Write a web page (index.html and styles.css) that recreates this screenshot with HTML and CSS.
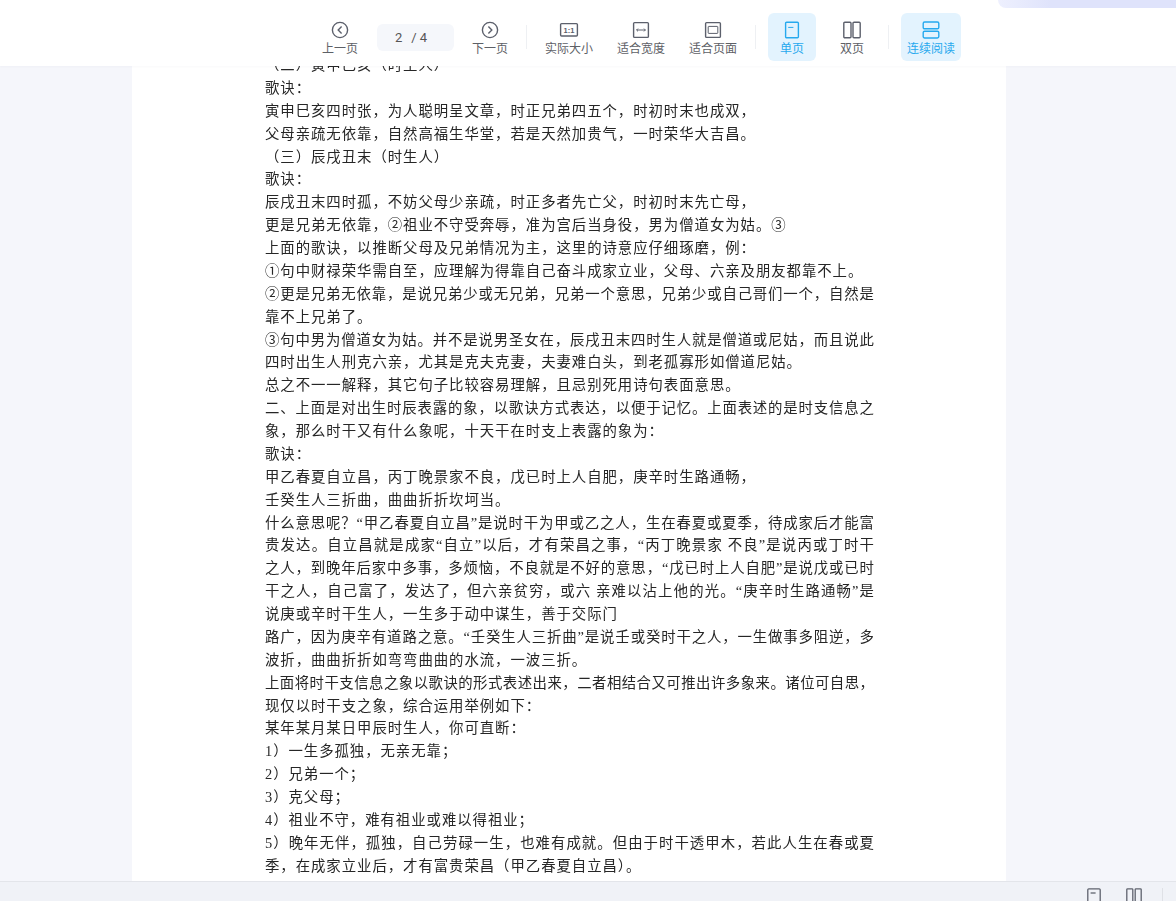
FILE: index.html
```html
<!DOCTYPE html>
<html lang="zh-CN">
<head>
<meta charset="utf-8">
<title>PDF 阅读器</title>
<link rel="stylesheet" href="styles.css">
</head>
<body>
<div class="app">
  <header class="toolbar">
    <div class="tool">
      <svg class="icon" viewBox="0 0 18 18"><circle cx="9" cy="9" r="7.6"/><path d="M10.6 5.6 7.2 9l3.4 3.4"/></svg>
      <span class="label">上一页</span>
    </div>
    <div class="pager"><span>2</span><span>/ 4</span></div>
    <div class="tool">
      <svg class="icon" viewBox="0 0 18 18"><circle cx="9" cy="9" r="7.6"/><path d="M7.4 5.6 10.8 9l-3.4 3.4"/></svg>
      <span class="label">下一页</span>
    </div>
    <i class="sep"></i>
    <div class="tool wide">
      <svg class="icon icon-lg" viewBox="0 0 20 18"><rect x="1.6" y="2.6" width="16.8" height="12.4" rx="1"/><text x="10" y="11.6" class="ratio">1:1</text></svg>
      <span class="label">实际大小</span>
    </div>
    <div class="tool wide">
      <svg class="icon" viewBox="0 0 18 18"><rect x="1.6" y="1.6" width="14.8" height="14.8" rx="1"/><path class="thin" d="M4.6 9h8.8M6 7.6 4.6 9 6 10.4M12 7.6 13.4 9 12 10.4"/></svg>
      <span class="label">适合宽度</span>
    </div>
    <div class="tool wide">
      <svg class="icon" viewBox="0 0 18 18"><rect x="1.6" y="1.6" width="14.8" height="14.8" rx="1"/><rect class="thin" x="4.2" y="5.4" width="9.6" height="7" rx=".5"/></svg>
      <span class="label">适合页面</span>
    </div>
    <i class="sep"></i>
    <div class="tool active">
      <svg class="icon" viewBox="0 0 18 18"><rect x="2.6" y="1.2" width="12.8" height="15.6" rx="1"/><path class="thin" d="M5.2 6.4h5.2"/></svg>
      <span class="label">单页</span>
    </div>
    <div class="tool">
      <svg class="icon" viewBox="0 0 18 18"><rect x=".8" y="1.2" width="7.2" height="15.6" rx="1"/><rect x="10" y="1.2" width="7.2" height="15.6" rx="1"/></svg>
      <span class="label">双页</span>
    </div>
    <i class="sep"></i>
    <div class="tool wide active">
      <svg class="icon" viewBox="0 0 18 18"><rect x="1.2" y="1" width="15.6" height="6.8" rx="1.4"/><rect x="1.2" y="10.2" width="15.6" height="6.8" rx="1.4"/></svg>
      <span class="label">连续阅读</span>
    </div>
    <div class="promo"></div>
  </header>

  <main class="viewer">
    <article class="page">
      <div class="ln">（二）寅申巳亥（时生人）</div>
      <div class="ln">歌诀：</div>
      <div class="ln">寅申巳亥四时张，为人聪明呈文章，时正兄弟四五个，时初时末也成双，</div>
      <div class="ln">父母亲疏无依靠，自然高福生华堂，若是天然加贵气，一时荣华大吉昌。</div>
      <div class="ln">（三）辰戌丑末（时生人）</div>
      <div class="ln">歌诀：</div>
      <div class="ln">辰戌丑末四时孤，不妨父母少亲疏，时正多者先亡父，时初时末先亡母，</div>
      <div class="ln">更是兄弟无依靠，②祖业不守受奔辱，准为宫后当身役，男为僧道女为姑。③</div>
      <div class="ln">上面的歌诀，以推断父母及兄弟情况为主，这里的诗意应仔细琢磨，例：</div>
      <div class="ln">①句中财禄荣华需自至，应理解为得靠自己奋斗成家立业，父母、六亲及朋友都靠不上。</div>
      <div class="ln fit">②更是兄弟无依靠，是说兄弟少或无兄弟，兄弟一个意思，兄弟少或自己哥们一个，自然是</div>
      <div class="ln">靠不上兄弟了。</div>
      <div class="ln fit">③句中男为僧道女为姑。并不是说男圣女在，辰戌丑末四时生人就是僧道或尼姑，而且说此</div>
      <div class="ln">四时出生人刑克六亲，尤其是克夫克妻，夫妻难白头，到老孤寡形如僧道尼姑。</div>
      <div class="ln">总之不一一解释，其它句子比较容易理解，且忌别死用诗句表面意思。</div>
      <div class="ln fit">二、上面是对出生时辰表露的象，以歌诀方式表达，以便于记忆。上面表述的是时支信息之</div>
      <div class="ln">象，那么时干又有什么象呢，十天干在时支上表露的象为：</div>
      <div class="ln">歌诀：</div>
      <div class="ln">甲乙春夏自立昌，丙丁晚景家不良，戊已时上人自肥，庚辛时生路通畅，</div>
      <div class="ln">壬癸生人三折曲，曲曲折折坎坷当。</div>
      <div class="ln fit">什么意思呢？“甲乙春夏自立昌”是说时干为甲或乙之人，生在春夏或夏季，待成家后才能富</div>
      <div class="ln fit">贵发达。自立昌就是成家“自立”以后，才有荣昌之事，“丙丁晚景家 不良”是说丙或丁时干</div>
      <div class="ln fit">之人，到晚年后家中多事，多烦恼，不良就是不好的意思，“戊已时上人自肥”是说戊或已时</div>
      <div class="ln fit">干之人，自己富了，发达了，但六亲贫穷，或六 亲难以沾上他的光。“庚辛时生路通畅”是</div>
      <div class="ln">说庚或辛时干生人，一生多于动中谋生，善于交际门</div>
      <div class="ln fit">路广，因为庚辛有道路之意。“壬癸生人三折曲”是说壬或癸时干之人，一生做事多阻逆，多</div>
      <div class="ln">波折，曲曲折折如弯弯曲曲的水流，一波三折。</div>
      <div class="ln fit">上面将时干支信息之象以歌诀的形式表述出来，二者相结合又可推出许多象来。诸位可自思，</div>
      <div class="ln">现仅以时干支之象，综合运用举例如下：</div>
      <div class="ln">某年某月某日甲辰时生人，你可直断：</div>
      <div class="ln">1）一生多孤独，无亲无靠；</div>
      <div class="ln">2）兄弟一个；</div>
      <div class="ln">3）克父母；</div>
      <div class="ln">4）祖业不守，难有祖业或难以得祖业；</div>
      <div class="ln fit">5）晚年无伴，孤独，自己劳碌一生，也难有成就。但由于时干透甲木，若此人生在春或夏</div>
      <div class="ln">季，在成家立业后，才有富贵荣昌（甲乙春夏自立昌）。</div>
    </article>
  </main>

  <footer class="status">
    <svg class="s-icon s-single" viewBox="0 0 14 18"><rect x=".8" y=".8" width="12.4" height="20" rx="1"/><path d="M3.6 5h5"/></svg>
    <svg class="s-icon s-double" viewBox="0 0 16 18"><rect x=".8" y=".8" width="6" height="20" rx=".8"/><rect x="9.2" y=".8" width="6" height="20" rx=".8"/></svg>
    <i class="s-sep"></i>
  </footer>
</div>
</body>
</html>
```
FILE: styles.css
```css
* { box-sizing: border-box; }
html, body { margin: 0; height: 100%; overflow: hidden; }
body { font-family: "Noto Sans CJK SC", "Noto Sans", sans-serif; background: #f5f6fb; }

.app { display: flex; flex-direction: column; height: 901px; }

.toolbar {
  position: relative;
  flex: 0 0 66px;
  display: flex;
  align-items: center;
  gap: 12px;
  padding: 13px 0 5px 316px;
  background: #fff;
  box-shadow: 0 1px 2px rgba(60, 70, 100, .03);
  z-index: 2;
}
.tool {
  width: 48px;
  height: 48px;
  flex: none;
  display: flex;
  flex-direction: column;
  align-items: center;
  padding-top: 8px;
  border-radius: 6px;
  color: #5d6066;
}
.tool.wide { width: 60px; }
.label { font-size: 12px; line-height: 16px; margin-top: 1px; white-space: nowrap; }
.icon { width: 18px; height: 18px; flex: none; fill: none; stroke: #5c606c; stroke-width: 1.4; }
.icon-lg { width: 20px; }
.icon .thin { stroke-width: 1; }
.ratio { font: 700 7.5px "Liberation Sans", sans-serif; fill: #5c606c; stroke: none; text-anchor: middle; }
.active { background: #e3f3fe; color: #27a9ee; }
.active .icon { stroke: #27a9ee; }

.pager {
  width: 77px;
  height: 27px;
  flex: none;
  margin-left: 1px;
  display: flex;
  justify-content: center;
  gap: 9px;
  align-items: center;
  border-radius: 6px;
  background: #f5f7fb;
  color: #555;
  font: 13px/1 Roboto, sans-serif;
  padding-right: 9px;
}
.sep { width: 1px; height: 24px; flex: none; background: #eef0f3; }

.promo {
  position: absolute;
  top: 0;
  right: 0;
  width: 178px;
  height: 8px;
  border-bottom-left-radius: 14px;
  background: linear-gradient(90deg, #eef0fe, #dfe3fb 30%);
}

.viewer { flex: 1; min-height: 0; overflow: hidden; }
.page {
  width: 874px;
  height: 830px;
  margin: -12px 0 0 132px;
  padding: 0 0 0 133px;
  background: #fff;
  color: #262626;
  font-size: 14.4px;
  filter: blur(.4px);
}
.ln { height: 22.88px; line-height: 22.88px; white-space: nowrap; letter-spacing: .95px; font-family: "Liberation Serif", "Noto Sans CJK SC", serif; }
.fit { width: 609px; white-space: normal; letter-spacing: 0; text-align: justify; text-align-last: justify; }

.status {
  flex: 0 0 20px;
  display: flex;
  align-items: flex-start;
  padding: 6px 0 0 1087px;
  background: #f0f2f7;
  border-top: 1px solid #e3e5ea;
  overflow: hidden;
}
.s-icon { flex: none; height: 18px; fill: none; stroke: #5f636e; stroke-width: 1.3; }
.s-single { width: 14px; }
.s-double { width: 16px; margin-left: 25px; }
.s-sep { width: 1px; height: 14px; margin-left: 20px; background: #dfe1e6; flex: none; }
```
